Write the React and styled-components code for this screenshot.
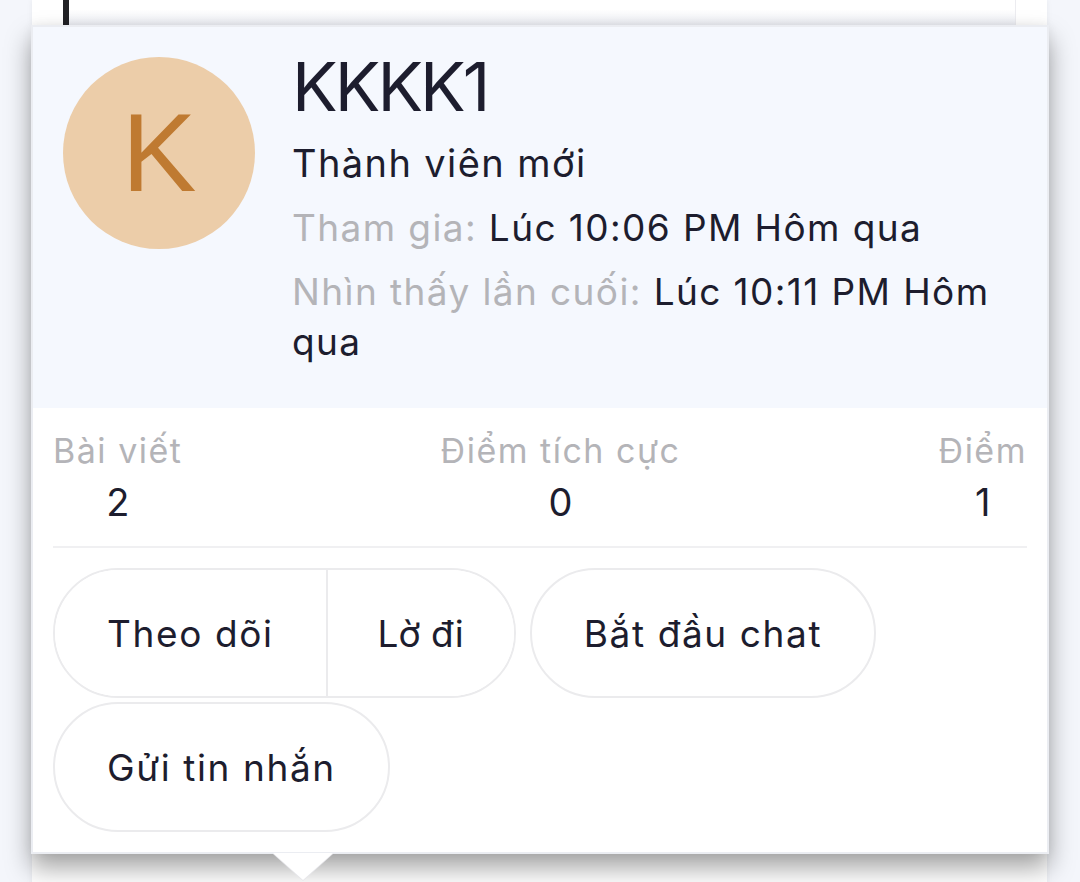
import React from "react";
import styled, { createGlobalStyle } from "styled-components";

const Global = createGlobalStyle`
  html, body { margin: 0; padding: 0; }
  body {
    background: #f4f6fb;
    font-family: Inter, "Noto Sans", "Liberation Sans", sans-serif;
    color: #1d1d2e;
    overflow: hidden;
  }
`;

const Page = styled.div`
  position: relative;
  width: 1080px;
  height: 882px;
  overflow: hidden;
`;

const Feed = styled.div`
  display: flex;
  flex-direction: column;
  gap: 828px;
  padding: 0 33px 0 32px;
`;

const Card = styled.div`
  background: #ffffff;
  height: ${(p) => p.$h}px;
  box-shadow: 0 0 6px rgba(0, 0, 0, 0.06);
  padding: 0 31px 0 31px;
  display: flex;
`;

const Quote = styled.div`
  flex: 1;
  border-left: 6px solid #222226;
  border-right: 1px solid #ececf0;
  background: linear-gradient(#ffffff 40%, #eceef4 100%);
`;

const Popup = styled.div`
  position: absolute;
  left: 31px;
  top: 25px;
  width: 1018px;
  box-sizing: border-box;
  border: 2px solid #ebedf2;
  background: #ffffff;
  box-shadow: 0 14px 24px rgba(0, 0, 0, 0.36), 0 0 10px rgba(0, 0, 0, 0.06);
`;

const Arrow = styled.div`
  position: absolute;
  left: 240px;
  bottom: -28px;
  width: 0;
  height: 0;
  border-left: 30px solid transparent;
  border-right: 30px solid transparent;
  border-top: 27px solid #ffffff;
  filter: drop-shadow(0 1px 0 #e6e6ea);
`;

const Header = styled.div`
  background: #f5f8fe;
  display: flex;
  gap: 37px;
  padding: 30px 30px 41px 30px;
`;

const Avatar = styled.div`
  flex: none;
  width: 192px;
  height: 192px;
  border-radius: 50%;
  background: #eccda9;
  color: #bf7a31;
  display: flex;
  align-items: center;
  justify-content: center;
  font-family: "Liberation Sans", Arial, sans-serif;
  font-size: 112px;
  line-height: 1;
`;

const Info = styled.div`
  flex: 1;
  display: flex;
  flex-direction: column;
  letter-spacing: 1.4px;
`;

const Name = styled.div`
  font-size: 68px;
  line-height: 58px;
  letter-spacing: -3px;
  font-weight: 400;
  color: #1d1d2e;
  margin-bottom: 22px;
`;

const Title = styled.div`
  font-size: 38px;
  line-height: 52px;
  margin-bottom: 14px;
`;

const Meta = styled.div`
  font-size: 37px;
  line-height: 50px;
  margin-bottom: ${(p) => p.$mb || 0}px;
`;

const MetaLabel = styled.span`
  color: #b4b4b8;
`;

const MetaValue = styled.span`
  color: #1d1d2e;
`;

const Body = styled.div`
  padding: 22px 20px 20px 20px;
`;

const Stats = styled.div`
  display: flex;
  justify-content: space-between;
  padding-bottom: 20px;
  border-bottom: 2px solid #f0f0f2;
`;

const Stat = styled.div`
  display: flex;
  flex-direction: column;
  align-items: center;
`;

const StatLabel = styled.div`
  font-size: 34px;
  line-height: 42px;
  letter-spacing: 1.5px;
  color: #b4b4b8;
`;

const StatValue = styled.div`
  font-size: 38px;
  line-height: 48px;
  margin-top: 6px;
  color: #1d1d2e;
`;

const Actions = styled.div`
  display: flex;
  flex-wrap: wrap;
  column-gap: 14px;
  row-gap: 4px;
  margin-top: 20px;
`;

const Group = styled.div`
  display: flex;
  border: 2px solid #ebebed;
  border-radius: 65px;
  overflow: hidden;
`;

const Button = styled.div`
  box-sizing: border-box;
  height: ${(p) => (p.$seg ? 126 : 130)}px;
  display: flex;
  align-items: center;
  padding: 0 ${(p) => (p.$tight ? 50 : 52)}px;
  font-size: 37px;
  letter-spacing: ${(p) => (p.$tight ? 0 : 1.6)}px;
  color: #1d1d2e;
  background: #ffffff;
  border: ${(p) => (p.$seg ? "none" : "2px solid #ebebed")};
  border-left: ${(p) => (p.$divider ? "2px solid #ebebed" : p.$seg ? "none" : "2px solid #ebebed")};
  border-radius: ${(p) => (p.$seg ? "0" : "65px")};
`;

export default function App() {
  return (
    <Page>
      <Global />
      <Feed>
        <Card $h={25}>
          <Quote />
        </Card>
        <Card $h={40} />
      </Feed>
      <Popup>
        <Header>
          <Avatar>K</Avatar>
          <Info>
            <Name>KKKK1</Name>
            <Title>Thành viên mới</Title>
            <Meta $mb={14}>
              <MetaLabel>Tham gia:</MetaLabel> <MetaValue>Lúc 10:06 PM Hôm qua</MetaValue>
            </Meta>
            <Meta>
              <MetaLabel>Nhìn thấy lần cuối:</MetaLabel> <MetaValue>Lúc 10:11 PM Hôm</MetaValue>{" "}
              <MetaValue>qua</MetaValue>
            </Meta>
          </Info>
        </Header>
        <Body>
          <Stats>
            <Stat>
              <StatLabel>Bài viết</StatLabel>
              <StatValue>2</StatValue>
            </Stat>
            <Stat>
              <StatLabel>Điểm tích cực</StatLabel>
              <StatValue>0</StatValue>
            </Stat>
            <Stat>
              <StatLabel>Điểm</StatLabel>
              <StatValue>1</StatValue>
            </Stat>
          </Stats>
          <Actions>
            <Group>
              <Button $seg>Theo dõi</Button>
              <Button $seg $divider $tight>Lờ đi</Button>
            </Group>
            <Button>Bắt đầu chat</Button>
            <Button>Gửi tin nhắn</Button>
          </Actions>
        </Body>
        <Arrow />
      </Popup>
    </Page>
  );
}
